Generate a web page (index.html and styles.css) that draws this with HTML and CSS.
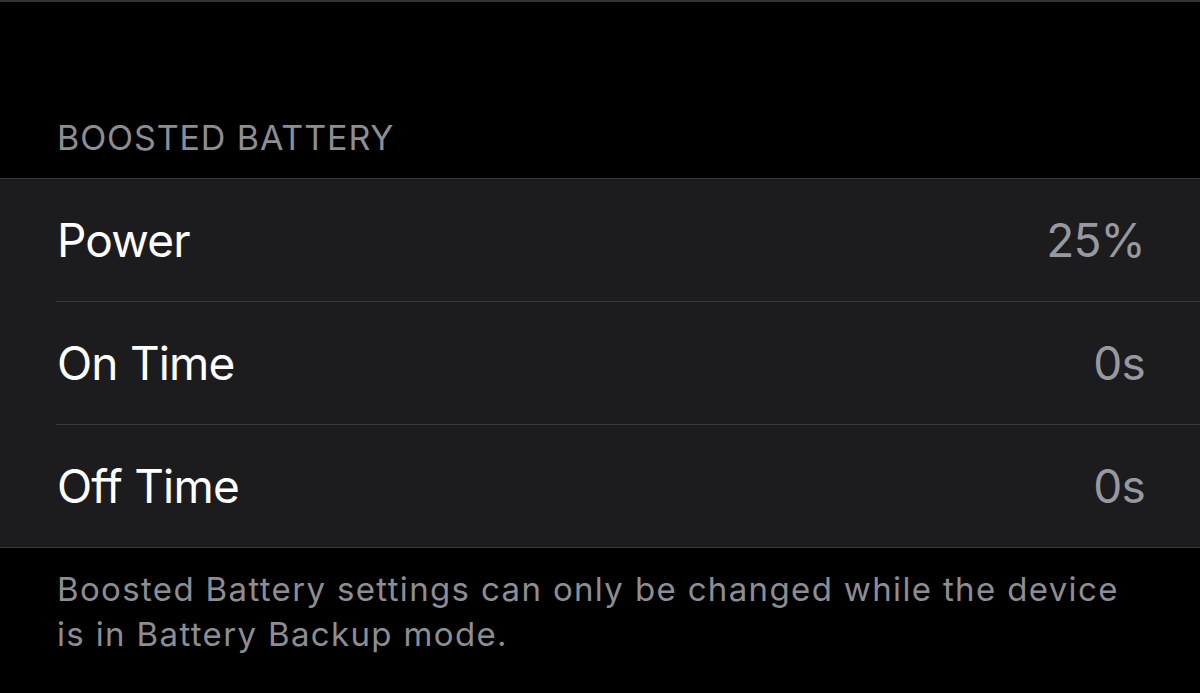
FILE: index.html
```html
<!DOCTYPE html>
<html lang="en">
<head>
  <meta charset="UTF-8" />
  <meta name="viewport" content="width=device-width, initial-scale=1.0" />
  <title>Boosted Battery</title>
  <link rel="stylesheet" href="styles.css">
</head>
<body>
  <div class="top-rule"></div>

  <h2 class="section-header">BOOSTED BATTERY</h2>

  <ul class="group">
    <li class="row">
      <span class="label">Power</span>
      <span class="value">25%</span>
    </li>
    <li class="row">
      <span class="label">On Time</span>
      <span class="value">0s</span>
    </li>
    <li class="row">
      <span class="label">Off Time</span>
      <span class="value">0s</span>
    </li>
  </ul>

  <p class="section-footer">
    Boosted Battery settings can only be changed while the device is in Battery Backup mode.
  </p>
</body>
</html>
```

FILE: styles.css
```css
body {
  margin: 0;
  background: #000;
  color: #fff;
  font-family: Inter, "Noto Sans", sans-serif;
  overflow: hidden;
}

.top-rule {
  height: 2px;
  background: #333336;
}

.section-header {
  margin: 115px 0 20px;
  padding-left: 57px;
  font-size: 34px;
  line-height: 41px;
  font-weight: 400;
  letter-spacing: 0.9px;
  color: #8d8d93;
}

.group {
  list-style: none;
  margin: 0;
  padding: 0;
  background: #1c1c1e;
  border-top: 1px solid #38383a;
  border-bottom: 1px solid #38383a;
}

.row {
  display: flex;
  align-items: center;
  justify-content: space-between;
  height: 122px;
  margin-left: 56px;
  padding: 0 55px 0 1px;
  border-bottom: 1px solid #38383a;
}

.row:last-child {
  border-bottom: none;
}

.label,
.value {
  font-size: 46px;
  line-height: 56px;
  letter-spacing: -0.8px;
}

.value {
  color: #98989f;
}

.section-footer {
  margin: 0;
  padding: 19px 58px 0 57px;
  font-size: 33px;
  line-height: 45px;
  letter-spacing: 1.35px;
  color: #8d8d93;
}
```
